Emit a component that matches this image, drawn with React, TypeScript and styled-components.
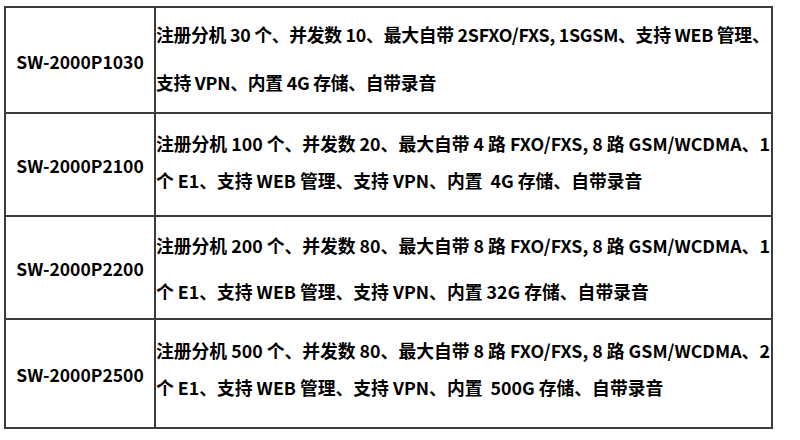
import React from 'react';
import styled, { createGlobalStyle } from 'styled-components';

const GlobalStyle = createGlobalStyle`
  html, body {
    margin: 0;
    padding: 0;
    background: #ffffff;
  }
  body {
    font-family: "Noto Sans CJK SC", "Noto Sans", sans-serif;
    color: #000000;
  }
`;

type Product = {
  model: string;
  lines: string[];
  height: number;
  padTop: number;
  gap: number;
  tracking: number;
};

const products: Product[] = [
  {
    model: 'SW-2000P1030',
    lines: [
      '注册分机 30 个、并发数 10、最大自带 2SFXO/FXS, 1SGSM、支持 WEB 管理、',
      '支持 VPN、内置 4G 存储、自带录音',
    ],
    height: 106,
    padTop: 15,
    gap: 26,
    tracking: -0.25,
  },
  {
    model: 'SW-2000P2100',
    lines: [
      '注册分机 100 个、并发数 20、最大自带 4 路 FXO/FXS, 8 路 GSM/WCDMA、1',
      '个 E1、支持 WEB 管理、支持 VPN、内置  4G 存储、自带录音',
    ],
    height: 103,
    padTop: 18,
    gap: 15,
    tracking: 0,
  },
  {
    model: 'SW-2000P2200',
    lines: [
      '注册分机 200 个、并发数 80、最大自带 8 路 FXO/FXS, 8 路 GSM/WCDMA、1',
      '个 E1、支持 WEB 管理、支持 VPN、内置 32G 存储、自带录音',
    ],
    height: 103,
    padTop: 17,
    gap: 24,
    tracking: 0,
  },
  {
    model: 'SW-2000P2500',
    lines: [
      '注册分机 500 个、并发数 80、最大自带 8 路 FXO/FXS, 8 路 GSM/WCDMA、2',
      '个 E1、支持 WEB 管理、支持 VPN、内置  500G 存储、自带录音',
    ],
    height: 109,
    padTop: 19,
    gap: 15,
    tracking: 0,
  },
];

const Table = styled.div`
  box-sizing: border-box;
  width: 769px;
  margin: 6px 0 0 4px;
  border: 2px solid #3c3c3c;
  border-bottom: none;
`;

const Row = styled.div<{ $height: number }>`
  box-sizing: border-box;
  display: grid;
  grid-template-columns: 150px 1fr;
  height: ${(p) => p.$height}px;
  border-bottom: 2px solid #3c3c3c;
`;

const ModelCell = styled.div`
  display: flex;
  align-items: center;
  justify-content: center;
  padding-top: 2px;
  border-right: 2px solid #3c3c3c;
  font-size: 17.5px;
  font-weight: 700;
  white-space: nowrap;
`;

const SpecCell = styled.div<{ $padTop: number; $gap: number; $tracking: number }>`
  display: flex;
  flex-direction: column;
  gap: ${(p) => p.$gap}px;
  padding: ${(p) => p.$padTop}px 0 0 0;
  overflow: hidden;
  font-size: 17.8px;
  font-weight: 700;
  letter-spacing: ${(p) => p.$tracking}px;
`;

const Line = styled.div`
  height: 22px;
  line-height: 22px;
  white-space: pre;
`;

export default function App() {
  return (
    <>
      <GlobalStyle />
      <Table>
        {products.map((p) => (
          <Row key={p.model} $height={p.height}>
            <ModelCell>{p.model}</ModelCell>
            <SpecCell $padTop={p.padTop} $gap={p.gap} $tracking={p.tracking}>
              {p.lines.map((l, i) => (
                <Line key={i}>{l}</Line>
              ))}
            </SpecCell>
          </Row>
        ))}
      </Table>
    </>
  );
}
